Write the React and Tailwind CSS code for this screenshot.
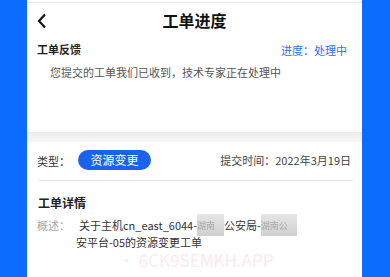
export default function App() {
  return (
    <div className="flex h-[277px] w-[390px] overflow-hidden bg-[#0b6cff] font-['Noto_Sans_CJK_SC','Noto_Sans',sans-serif]">
      <div className="relative ml-[27px] flex h-full w-[335px] flex-col bg-white">
        <div className="h-[2px] bg-white" />
        <div className="h-[1px] bg-[#e9e9e9]" />
        {/* header */}
        <div className="relative flex h-[34px] items-center justify-center">
          <svg className="absolute left-[10px] top-[10px]" width="10" height="16" viewBox="0 0 10 16">
            <polyline points="8,1.5 2,8 8,14.5" fill="none" stroke="#111" strokeWidth="2.2" strokeLinejoin="miter" />
          </svg>
          <span className="text-[16px] font-bold leading-none text-[#111]">工单进度</span>
        </div>
        {/* feedback section */}
        <div className="flex h-[95px] flex-col px-[10px]">
          <div className="mt-[1px] flex h-[22px] items-center justify-between pr-[5px]">
            <span className="text-[11px] font-bold text-[#222]">工单反馈</span>
            <span className="mt-[3px] text-[11px] text-[#2f6ef6]">进度：处理中</span>
          </div>
          <div className="mt-[4px] h-[16px] pl-[13px] text-[11px] leading-[16px] text-[#555]">
            您提交的工单我们已收到，技术专家正在处理中
          </div>
        </div>
        <div className="h-[10px] bg-gradient-to-b from-[#ececec] to-[#f6f6f6]" />
        {/* detail section */}
        <div className="flex flex-1 flex-col">
          <div className="mt-[8px] flex h-[20px] items-center justify-between pl-[10px] pr-[11px]">
            <div className="flex items-center">
              <span className="mt-[3px] w-[41px] text-[11px] text-[#333]">类型：</span>
              <span className="flex h-[20px] w-[73px] items-center justify-center rounded-full bg-[#1b63ee] text-[12px] text-white">
                资源变更
              </span>
            </div>
            <span className="text-[11px] text-[#444]">提交时间：2022年3月19日</span>
          </div>
          <div className="ml-[12px] mr-[9px] mt-[10px] h-[1px] bg-[#e6e6e6]" />
          <div className="mt-[14px] flex h-[16px] items-center pl-[11px] text-[12px] font-bold text-[#222]">
            工单详情
          </div>
          <div className="mt-[5px] flex h-[18px] items-center pl-[10px] text-[11px] text-[#333]">
            <span className="w-[42px] text-[#aaaaaa]">概述：</span>
            <span>关于主机cn_east_6044-</span>
            <span className="flex h-[22px] w-[27px] items-end bg-gradient-to-b from-[#e6e6e6] to-[#cfcfcf] pb-[4px] text-[9px] text-[#a9a9a9] blur-[0.4px]">
              湖南
            </span>
            <span>公安局-</span>
            <span className="flex h-[22px] w-[36px] items-end bg-gradient-to-b from-[#e6e6e6] to-[#cfcfcf] pb-[4px] text-[9px] text-[#a9a9a9] blur-[0.4px]">
              湖南公
            </span>
          </div>
          <div className="flex h-[16px] items-center pl-[49px] text-[11px] leading-[16px] text-[#333]">
            安平台-05的资源变更工单
          </div>
        </div>
        <div className="absolute left-[91px] top-[253px] text-[17px] leading-[14px] text-[#fde8f3]">
          • 6CK9SEMKH.APP
        </div>
      </div>
    </div>
  );
}
